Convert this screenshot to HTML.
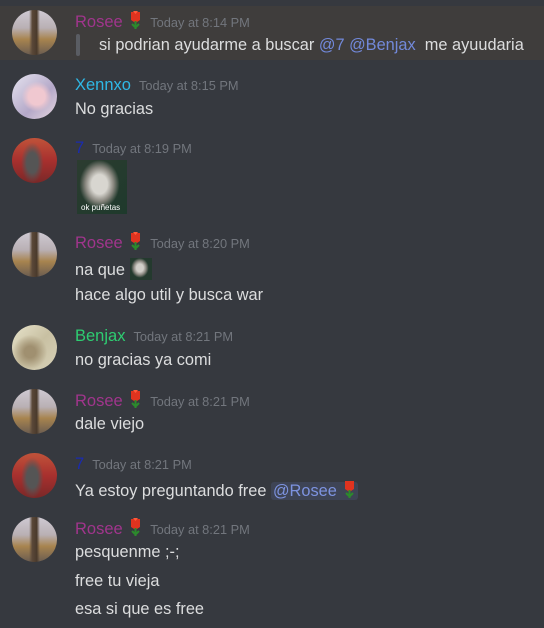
<!DOCTYPE html>
<html><head><meta charset="utf-8"><style>
*{margin:0;padding:0;box-sizing:border-box}
body{width:544px;height:628px;background:#36393f;font-family:"Liberation Sans",sans-serif;position:relative;overflow:hidden;color:#dcddde}
.hl{position:absolute;left:0;top:6px;width:544px;height:54px;background:#3f3d3c}
.bar{position:absolute;left:76px;top:34px;width:4px;height:22px;border-radius:2px;background:#5a5d63}
.av{position:absolute;left:12px;width:45px;height:45px;border-radius:50%;overflow:hidden}
.t{position:absolute;left:75px;height:20px;line-height:20px;font-size:16.35px;white-space:nowrap}
.n{font-size:16.5px}
.ts{font-size:12.8px;color:#72767d;margin-left:8px}
.m{color:#7289da}
.mb{background:rgba(114,137,218,.15);border-radius:3px;padding:0 2px;color:#7d93e0}
svg.r{vertical-align:-3px;margin-left:2px}
.rosee{background:linear-gradient(90deg,transparent 38%,#5a4838 45%,#4a3a2c 55%,transparent 62%),linear-gradient(180deg,#cfcad3 0%,#b9b0b4 40%,#a8844f 65%,#6a5c50 100%)}
.xen{background:radial-gradient(circle at 55% 50%,#f0c8d0 0 25%,transparent 45%),linear-gradient(135deg,#e6e4f0,#b4a8c8 60%,#e8d8e0)}
.sev{background:radial-gradient(ellipse 25% 45% at 45% 55%,#555 0 50%,transparent 100%),linear-gradient(180deg,#c0533a,#a8302e 50%,#7a2828)}
.ben{background:radial-gradient(circle at 40% 60%,#a09070 0 15%,transparent 45%),linear-gradient(135deg,#e8e4cc,#c8c0a2 50%,#d8d2b8)}
.img{position:absolute;left:77px;top:160px;width:50px;height:54px;background:radial-gradient(ellipse 40% 45% at 45% 45%,#d8d6d0 0 40%,#8a8880 70%,transparent 100%),linear-gradient(135deg,#2c3c30,#1e3a2c);}
.img span{position:absolute;left:4px;bottom:2px;font-size:8px;color:#fff}
.sm{display:inline-block;width:22px;height:22px;vertical-align:-5px;background:radial-gradient(ellipse 40% 45% at 45% 45%,#d0cec8 0 40%,#8a8880 70%,transparent 100%),#243a2e}
</style></head><body>
<div class="hl"></div><div class="bar"></div>

<div class="av rosee" style="top:10px"></div>
<div class="t" style="top:10px"><span class="n" style="color:#a0358c">Rosee</span> <svg class="r" width="13" height="20" viewBox="0 0 13 20"><path d="M2 2h9v8l-4.5 3L2 10z" fill="#e0331f"/><path d="M4 1l2.5 3L9 1" fill="#ff5a3a"/><rect x="5.5" y="11" width="2" height="8" fill="#2c8a2c"/><path d="M3 14l3 3M10 14l-3 3" stroke="#2c8a2c" stroke-width="2"/></svg><span class="ts">Today at 8:14 PM</span></div>
<div class="t" style="top:35px;left:99px">si podrian ayudarme a buscar <span class="m">@7</span> <span class="m">@Benjax</span>&nbsp; me ayuudaria</div>

<div class="av xen" style="top:74px"></div>
<div class="t" style="top:75px"><span class="n" style="color:#2fb8e6">Xennxo</span><span class="ts">Today at 8:15 PM</span></div>
<div class="t" style="top:99px">No gracias</div>

<div class="av sev" style="top:138px"></div>
<div class="t" style="top:138px"><span class="n" style="color:#1a2bb0">7</span><span class="ts">Today at 8:19 PM</span></div>
<div class="img"><span>ok puñetas</span></div>

<div class="av rosee" style="top:232px"></div>
<div class="t" style="top:231px"><span class="n" style="color:#a0358c">Rosee</span> <svg class="r" width="13" height="20" viewBox="0 0 13 20"><path d="M2 2h9v8l-4.5 3L2 10z" fill="#e0331f"/><path d="M4 1l2.5 3L9 1" fill="#ff5a3a"/><rect x="5.5" y="11" width="2" height="8" fill="#2c8a2c"/><path d="M3 14l3 3M10 14l-3 3" stroke="#2c8a2c" stroke-width="2"/></svg><span class="ts">Today at 8:20 PM</span></div>
<div class="t" style="top:258px">na que <span class="sm"></span></div>
<div class="t" style="top:285px">hace algo util y busca war</div>

<div class="av ben" style="top:325px"></div>
<div class="t" style="top:326px"><span class="n" style="color:#2ecc71">Benjax</span><span class="ts">Today at 8:21 PM</span></div>
<div class="t" style="top:350px">no gracias ya comi</div>

<div class="av rosee" style="top:389px"></div>
<div class="t" style="top:389px"><span class="n" style="color:#a0358c">Rosee</span> <svg class="r" width="13" height="20" viewBox="0 0 13 20"><path d="M2 2h9v8l-4.5 3L2 10z" fill="#e0331f"/><path d="M4 1l2.5 3L9 1" fill="#ff5a3a"/><rect x="5.5" y="11" width="2" height="8" fill="#2c8a2c"/><path d="M3 14l3 3M10 14l-3 3" stroke="#2c8a2c" stroke-width="2"/></svg><span class="ts">Today at 8:21 PM</span></div>
<div class="t" style="top:414px">dale viejo</div>

<div class="av sev" style="top:453px"></div>
<div class="t" style="top:454px"><span class="n" style="color:#1a2bb0">7</span><span class="ts">Today at 8:21 PM</span></div>
<div class="t" style="top:479px">Ya estoy preguntando free <span class="mb">@Rosee <svg class="r" width="13" height="20" viewBox="0 0 13 20"><path d="M2 2h9v8l-4.5 3L2 10z" fill="#e0331f"/><rect x="5.5" y="11" width="2" height="8" fill="#2c8a2c"/><path d="M3 14l3 3M10 14l-3 3" stroke="#2c8a2c" stroke-width="2"/></svg></span></div>

<div class="av rosee" style="top:517px"></div>
<div class="t" style="top:517px"><span class="n" style="color:#a0358c">Rosee</span> <svg class="r" width="13" height="20" viewBox="0 0 13 20"><path d="M2 2h9v8l-4.5 3L2 10z" fill="#e0331f"/><path d="M4 1l2.5 3L9 1" fill="#ff5a3a"/><rect x="5.5" y="11" width="2" height="8" fill="#2c8a2c"/><path d="M3 14l3 3M10 14l-3 3" stroke="#2c8a2c" stroke-width="2"/></svg><span class="ts">Today at 8:21 PM</span></div>
<div class="t" style="top:542px">pesquenme ;-;</div>
<div class="t" style="top:571px">free tu vieja</div>
<div class="t" style="top:599px">esa si que es free</div>
</body></html>
